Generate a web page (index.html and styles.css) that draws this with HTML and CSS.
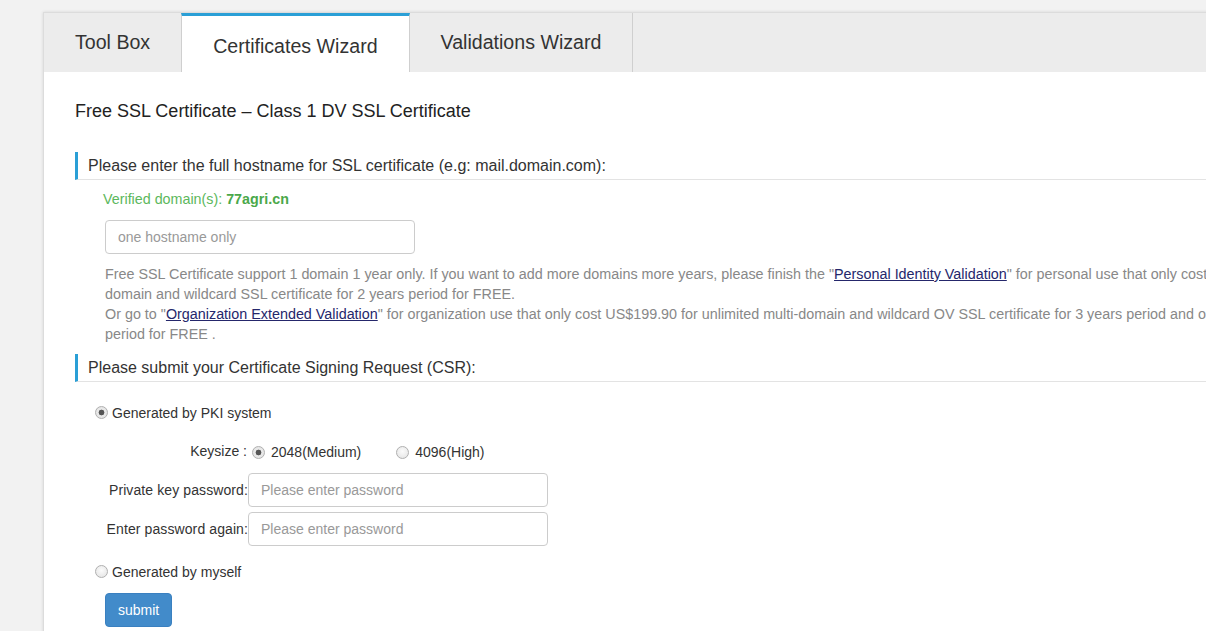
FILE: index.html
```html
<!DOCTYPE html>
<html lang="en">
<head>
<meta charset="utf-8">
<title>Certificates Wizard</title>
<link rel="stylesheet" href="styles.css">
</head>
<body>
<div class="panel">
  <ul class="tabs">
    <li class="tab">Tool Box</li>
    <li class="tab active">Certificates Wizard</li>
    <li class="tab last">Validations Wizard</li>
  </ul>
  <div class="content">
    <h1 class="title">Free SSL Certificate – Class 1 DV SSL Certificate</h1>

    <h2 class="section-head">Please enter the full hostname for SSL certificate (e.g: mail.domain.com):</h2>
    <div class="section-body">
      <div class="verified">Verified domain(s): <b>77agri.cn</b></div>
      <input class="text-input host" type="text" placeholder="one hostname only">
      <p class="note">
        <span class="line">Free SSL Certificate support 1 domain 1 year only. If you want to add more domains more years, please finish the "<a href="#">Personal Identity Validation</a>" for personal use that only cost US$59.90 for unlimited multi-</span>
        <span class="line">domain and wildcard SSL certificate for 2 years period for FREE.</span>
        <span class="line">Or go to "<a href="#">Organization Extended Validation</a>" for organization use that only cost US$199.90 for unlimited multi-domain and wildcard OV SSL certificate for 3 years period and one more year</span>
        <span class="line">period for FREE .</span>
      </p>
    </div>

    <h2 class="section-head">Please submit your Certificate Signing Request (CSR):</h2>
    <div class="csr">
      <label class="radio-line pki"><input class="radio" type="radio" name="csr" checked><span>Generated by PKI system</span></label>
      <div class="form-row keysize">
        <span class="row-label">Keysize :</span>
        <label class="key-opt"><input class="radio" type="radio" name="key" checked><span>2048(Medium)</span></label>
        <label class="key-opt"><input class="radio" type="radio" name="key"><span>4096(High)</span></label>
      </div>
      <div class="form-row pw">
        <span class="row-label">Private key password:</span>
        <input class="text-input pass" type="password" placeholder="Please enter password">
      </div>
      <div class="form-row pw second">
        <span class="row-label">Enter password again:</span>
        <input class="text-input pass" type="password" placeholder="Please enter password">
      </div>
      <label class="radio-line myself"><input class="radio" type="radio" name="csr"><span>Generated by myself</span></label>
      <button class="btn-submit" type="button">submit</button>
    </div>
  </div>
</div>
</body>
</html>
```
FILE: styles.css
```css
html, body {
  margin: 0;
  padding: 0;
  overflow: hidden;
  height: 100%;
}
body {
  background: #f2f2f2;
  font-family: "Liberation Sans", Arial, sans-serif;
  color: #333;
  padding: 12px 0 0 43px;
  box-sizing: border-box;
}
.panel {
  width: 1320px;
  background: #fff;
  border: 1px solid #dcdcdc;
  box-shadow: 0 0 3px rgba(0,0,0,0.12);
  min-height: 100vh;
  box-sizing: border-box;
}
.tabs {
  display: flex;
  list-style: none;
  margin: 0;
  padding: 0;
  background: #ececec;
  height: 59px;
}
.tab {
  padding: 0 31px;
  font-size: 19.6px;
  line-height: 59px;
  color: #333;
  white-space: nowrap;
}
.tab.active {
  background: #fff;
  border-top: 3px solid #2a9fd6;
  border-left: 1px solid #cfcfcf;
  border-right: 1px solid #cfcfcf;
  padding-top: 4px;
  line-height: 52px;
  height: 52px;
}
.tab.last {
  border-right: 1px solid #cfcfcf;
}
.content {
  padding: 27px 0 0 31px;
}
.title {
  margin: 0 0 29px;
  font-size: 18px;
  font-weight: normal;
  line-height: 24px;
  color: #222;
}
.section-head {
  margin: 0;
  font-size: 16px;
  font-weight: normal;
  line-height: 19px;
  padding: 4px 0 4px 10px;
  border-left: 3px solid #2a9fd6;
  border-bottom: 1px solid #e3e3e3;
  color: #333;
}
.section-body {
  padding-left: 30px;
  padding-bottom: 10px;
}
.verified {
  margin: 10px 0 0 -2px;
  font-size: 14.3px;
  line-height: 18px;
  color: #5cb85c;
}
.verified b {
  color: #4aa84a;
}
.text-input {
  display: block;
  box-sizing: border-box;
  height: 34px;
  padding: 6px 12px;
  border: 1px solid #cccccc;
  border-radius: 4px;
  font-family: inherit;
  font-size: 14px;
  color: #555;
  background: #fff;
}
.text-input::placeholder {
  color: #999;
}
.host {
  width: 310px;
  margin-top: 12px;
}
.note {
  margin: 10px 0 0;
  font-size: 14.35px;
  line-height: 20px;
  color: #888;
}
.note .line {
  display: block;
  white-space: nowrap;
}
.note a {
  color: #25276b;
  text-decoration: underline;
}
.csr {
  padding-left: 20px;
}
.radio {
  appearance: none;
  -webkit-appearance: none;
  width: 13px;
  height: 13px;
  margin: 0;
  border: 1px solid #b0b0b0;
  border-radius: 50%;
  background: radial-gradient(circle at 50% 40%, #fbfbfb 0%, #e2e2e2 100%);
  box-sizing: border-box;
  flex: none;
}
.radio:checked {
  background: radial-gradient(circle, #555 0 2.6px, #eaeaea 3.2px, #e0e0e0 100%);
}
.radio-line {
  display: flex;
  align-items: center;
  gap: 4px;
  font-size: 14px;
  line-height: 20px;
  color: #333;
}
.radio-line .radio {
  position: relative;
  top: -1px;
}
.pki {
  margin-top: 21px;
}
.form-row {
  display: flex;
  align-items: center;
  font-size: 14px;
  color: #333;
}
.row-label {
  width: 152px;
  text-align: right;
  white-space: nowrap;
  flex: none;
}
.keysize {
  margin-top: 19px;
  line-height: 20px;
}
.keysize .row-label {
  position: relative;
  top: -1px;
}
.key-opt {
  display: flex;
  align-items: center;
  gap: 6px;
  margin-left: 5px;
}
.key-opt + .key-opt {
  margin-left: 35px;
}
.pw {
  margin-top: 11px;
}
.pw .row-label {
  width: 153px;
  letter-spacing: 0.1px;
}
.pw.second {
  margin-top: 5px;
}
.pass {
  width: 300px;
}
.myself {
  margin-top: 16px;
}
.btn-submit {
  display: block;
  margin: 11px 0 0 10px;
  height: 34px;
  padding: 6px 12px;
  border: 1px solid #3a80c0;
  border-radius: 4px;
  background: #428bca;
  color: #fff;
  font-family: inherit;
  font-size: 14px;
}
```
